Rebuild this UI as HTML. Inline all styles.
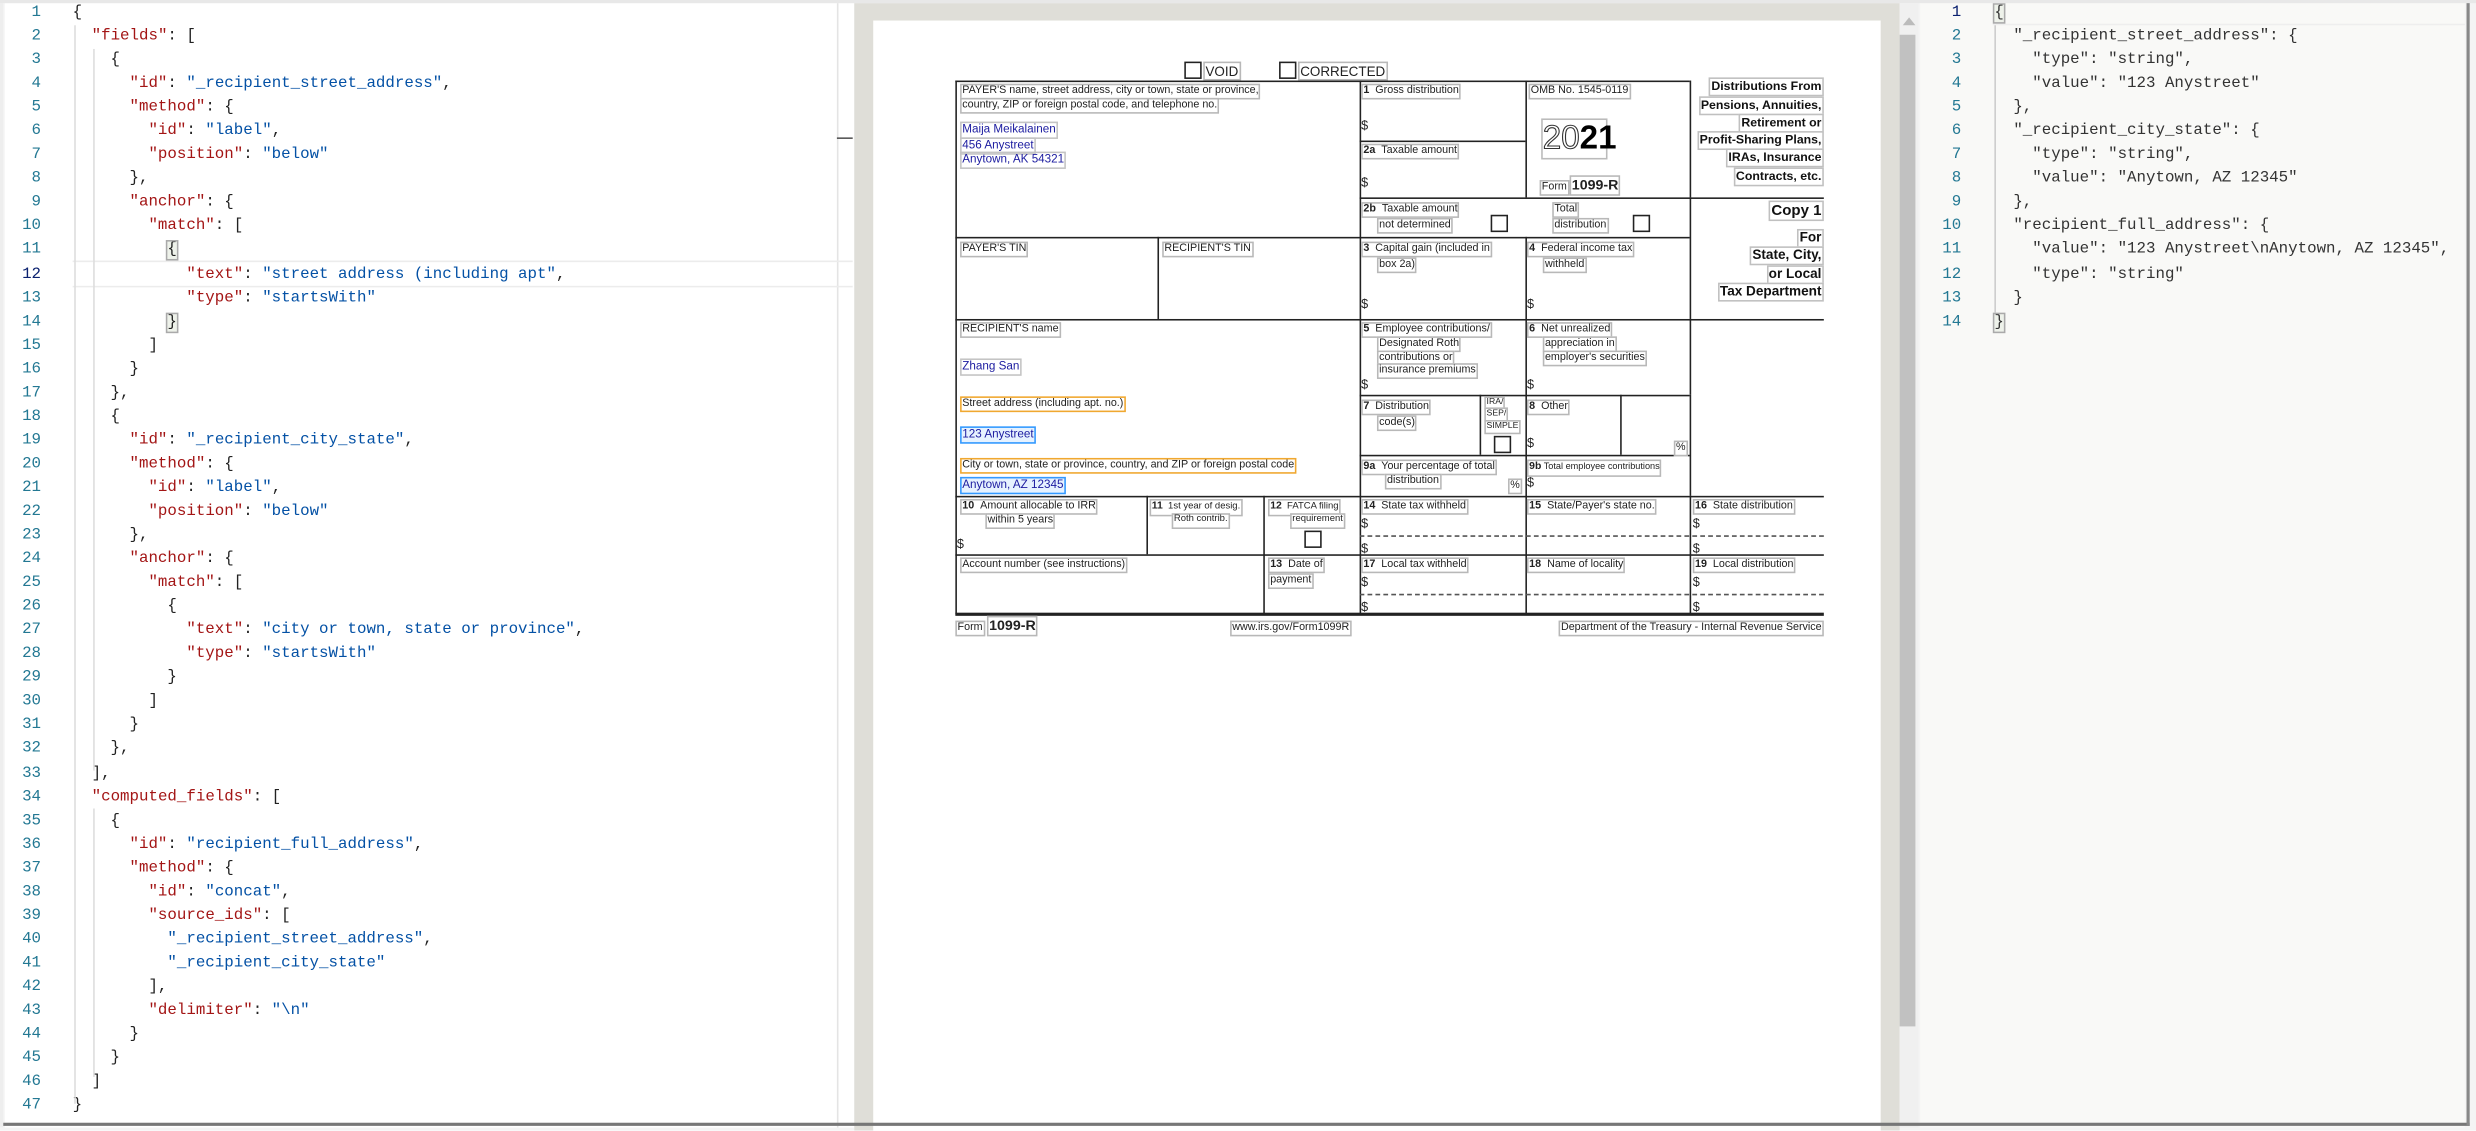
<!DOCTYPE html>
<html><head><meta charset="utf-8"><style>
html,body{margin:0;padding:0;width:2476px;height:1131px;overflow:hidden;background:#fff}
#r{position:absolute;left:0;top:0;width:1568px;height:716.3px;transform:scale(1.57908);transform-origin:0 0;overflow:hidden;background:#f4f4f4}
.a{position:absolute}
.ed{font-family:"Liberation Mono",monospace;font-size:10px;color:#222}
.ln{position:absolute;width:26px;text-align:right;color:#237893;line-height:15.05px}
.cd{position:absolute;white-space:pre;line-height:15.05px}
.k{color:#a31515}.s{color:#0451a5}
.l{position:absolute;font-family:"Liberation Sans",sans-serif;font-size:6.8px;color:#222;line-height:7.8px;white-space:nowrap;border:0.6px solid #b8b8b8;padding:0 0.4px;background:#fff}
.b{position:absolute;font-family:"Liberation Sans",sans-serif;font-size:7.4px;color:#1c1ca0;line-height:8.6px;white-space:nowrap;border:0.6px solid #c4c4c4;padding:0 0.4px}
.t{position:absolute;font-family:"Liberation Sans",sans-serif;font-size:7.8px;font-weight:bold;color:#111;line-height:9.5px;white-space:nowrap;border:0.6px solid #c0c0c0;padding:0 0.5px;background:#fff}
.h{position:absolute;background:#222;height:1px}
.v{position:absolute;background:#222;width:1px}
.d{position:absolute;border-top:1px dashed #555;height:0}
.cb{position:absolute;width:9px;height:9px;border:0.8px solid #222;background:#fff}
.dl{position:absolute;font-family:"Liberation Sans",sans-serif;font-size:8px;color:#222}
</style></head><body><div id="r">
<div class="a" style="left:3px;top:2px;width:527px;height:712px;background:#fff"></div>
<div class="a" style="left:530px;top:2px;width:10px;height:712px;background:#fff;border-left:1px solid #e4e4e4"></div>
<div class="a" style="left:530px;top:87px;width:10px;height:1.3px;background:#555"></div>
<div class="a" style="left:46px;top:165px;width:494px;height:15px;border-top:1px solid #ececec;border-bottom:1px solid #ececec"></div>
<div class="ed">
<div class="a" style="left:0;top:1px">
<div class="ln" style="left:0;top:0">1<br>2<br>3<br>4<br>5<br>6<br>7<br>8<br>9<br>10<br>11<br><span style="color:#0b216f">12</span><br>13<br>14<br>15<br>16<br>17<br>18<br>19<br>20<br>21<br>22<br>23<br>24<br>25<br>26<br>27<br>28<br>29<br>30<br>31<br>32<br>33<br>34<br>35<br>36<br>37<br>38<br>39<br>40<br>41<br>42<br>43<br>44<br>45<br>46<br>47</div>
<div class="cd" style="left:46px;top:0">{
  <span class="k">"fields"</span>: [
    {
      <span class="k">"id"</span>: <span class="s">"_recipient_street_address"</span>,
      <span class="k">"method"</span>: {
        <span class="k">"id"</span>: <span class="s">"label"</span>,
        <span class="k">"position"</span>: <span class="s">"below"</span>
      },
      <span class="k">"anchor"</span>: {
        <span class="k">"match"</span>: [
          <span style="background:#eef2ea;outline:0.6px solid #aaa">{</span>
            <span class="k">"text"</span>: <span class="s">"street address (including apt"</span>,
            <span class="k">"type"</span>: <span class="s">"startsWith"</span>
          <span style="background:#eef2ea;outline:0.6px solid #aaa">}</span>
        ]
      }
    },
    {
      <span class="k">"id"</span>: <span class="s">"_recipient_city_state"</span>,
      <span class="k">"method"</span>: {
        <span class="k">"id"</span>: <span class="s">"label"</span>,
        <span class="k">"position"</span>: <span class="s">"below"</span>
      },
      <span class="k">"anchor"</span>: {
        <span class="k">"match"</span>: [
          {
            <span class="k">"text"</span>: <span class="s">"city or town, state or province"</span>,
            <span class="k">"type"</span>: <span class="s">"startsWith"</span>
          }
        ]
      }
    },
  ],
  <span class="k">"computed_fields"</span>: [
    {
      <span class="k">"id"</span>: <span class="s">"recipient_full_address"</span>,
      <span class="k">"method"</span>: {
        <span class="k">"id"</span>: <span class="s">"concat"</span>,
        <span class="k">"source_ids"</span>: [
          <span class="s">"_recipient_street_address"</span>,
          <span class="s">"_recipient_city_state"</span>
        ],
        <span class="k">"delimiter"</span>: <span class="s">"\n"</span>
      }
    }
  ]
}</div>
</div>
</div>
<div class="a" style="left:47px;top:16px;width:0.6px;height:683px;background:#ddd"></div>
<div class="a" style="left:59px;top:31px;width:0.6px;height:457px;background:#ddd"></div>
<div class="a" style="left:59px;top:512px;width:0.6px;height:170px;background:#ddd"></div>
<div class="a" style="left:541px;top:2px;width:662px;height:714px;background:#dfded8"></div>
<div class="a" style="left:553px;top:13px;width:638px;height:703px;background:#fff"></div>
<div class="a" style="left:1203px;top:2px;width:12px;height:712px;background:#f0f0f0"></div>
<div class="a" style="left:1203px;top:22px;width:10px;height:628px;background:#c1c1c1"></div>
<div class="a" style="left:1205px;top:11px;width:0;height:0;border-left:4px solid transparent;border-right:4px solid transparent;border-bottom:5px solid #bbb"></div>
<div class="a" style="left:1216px;top:2px;width:345px;height:712px;background:#f9f9f7"></div>
<div class="a" style="left:1262px;top:1px;width:299px;height:14px;border-bottom:1px solid #eee"></div>
<div class="ed" style="color:#333">
<div class="ln" style="left:1216px;top:1px">
<span style="color:#0b216f">1</span><br>2<br>3<br>4<br>5<br>6<br>7<br>8<br>9<br>10<br>11<br>12<br>13<br>14</div>
<div class="cd" style="left:1263px;top:1px"><span style="background:#eef2ea;outline:0.6px solid #aaa">{</span>
  "_recipient_street_address": {
    "type": "string",
    "value": "123 Anystreet"
  },
  "_recipient_city_state": {
    "type": "string",
    "value": "Anytown, AZ 12345"
  },
  "recipient_full_address": {
    "value": "123 Anystreet\nAnytown, AZ 12345",
    "type": "string"
  }
<span style="background:#eef2ea;outline:0.6px solid #aaa">}</span></div>
</div>
<div class="a" style="left:1263px;top:16px;width:0.6px;height:182px;background:#ccc"></div>
<div class="a" style="left:0;top:0;width:1568px;height:2px;background:#e8e8e8"></div>
<div class="a" style="left:2px;top:711px;width:1562px;height:2px;background:#777"></div>
<div class="a" style="left:1562px;top:2px;width:2px;height:711px;background:#888"></div>
<div class="a" style="left:0;top:2px;width:2px;height:712px;background:#eee"></div>

<div class="cb" style="left:750px;top:39px"></div><div class="l" style="left:762px;top:39px;font-size:8.5px;line-height:10px">VOID</div>
<div class="cb" style="left:810px;top:39px"></div><div class="l" style="left:822px;top:39px;font-size:8.5px;line-height:10px">CORRECTED</div>

<div class="h" style="left:605px;top:51px;width:465px"></div>
<div class="v" style="left:605px;top:51px;height:338px"></div>
<div class="v" style="left:861px;top:51px;height:338px"></div>
<div class="v" style="left:966px;top:51px;height:74px"></div>
<div class="v" style="left:1070px;top:51px;height:74px"></div>
<div class="h" style="left:861px;top:89px;width:105px"></div>
<div class="h" style="left:861px;top:125px;width:294px"></div>
<div class="v" style="left:1070px;top:125px;height:77px"></div>
<div class="h" style="left:605px;top:150px;width:465px"></div>
<div class="v" style="left:733px;top:150px;height:52px"></div>
<div class="v" style="left:966px;top:150px;height:239px"></div>
<div class="h" style="left:605px;top:202px;width:550px"></div>
<div class="v" style="left:1070px;top:202px;height:48px"></div>
<div class="h" style="left:861px;top:250px;width:209px"></div>
<div class="v" style="left:937px;top:250px;height:38px"></div>
<div class="v" style="left:1026px;top:250px;height:38px"></div>
<div class="v" style="left:1070px;top:250px;height:64px"></div>
<div class="h" style="left:861px;top:288px;width:209px"></div>
<div class="h" style="left:605px;top:314px;width:550px"></div>
<div class="v" style="left:726px;top:314px;height:37px"></div>
<div class="v" style="left:800px;top:314px;height:75px"></div>
<div class="v" style="left:1070px;top:314px;height:75px"></div>
<div class="h" style="left:605px;top:351px;width:550px"></div>
<div class="h" style="left:605px;top:388px;width:550px;height:1.5px"></div>
<div class="d" style="left:861px;top:339px;width:294px"></div>
<div class="d" style="left:861px;top:376px;width:294px"></div>

<div class="l" style="left:608px;top:53px">PAYER'S name, street address, city or town, state or province,</div>
<div class="l" style="left:608px;top:62px">country, ZIP or foreign postal code, and telephone no.</div>
<div class="b" style="left:608px;top:77px">Maija Meikalainen</div>
<div class="b" style="left:608px;top:87px">456 Anystreet</div>
<div class="b" style="left:608px;top:96px">Anytown, AK 54321</div>
<div class="l" style="left:862px;top:53px"><b>1</b> &nbsp;Gross distribution</div>
<div class="dl" style="left:862px;top:75px">$</div>
<div class="l" style="left:862px;top:91px"><b>2a</b> &nbsp;Taxable amount</div>
<div class="dl" style="left:862px;top:111px">$</div>
<div class="l" style="left:968px;top:53px">OMB No. 1545-0119</div>
<div class="a" style="left:976px;top:75px;width:40px;height:24px;border:0.6px solid #bbb;font-family:'Liberation Sans',sans-serif;font-size:21px;line-height:24px;text-align:center;white-space:nowrap"><span style="color:#fff;-webkit-text-stroke:0.7px #333">20</span><b>21</b></div>
<div class="l" style="left:975px;top:114px">Form</div>
<div class="l" style="left:994px;top:111px;font-size:9px;line-height:10.5px;font-weight:bold">1099-R</div>
<div class="t" style="right:413px;top:49px">Distributions From</div>
<div class="t" style="right:413px;top:61px">Pensions, Annuities,</div>
<div class="t" style="right:413px;top:72px">Retirement or</div>
<div class="t" style="right:413px;top:83px">Profit-Sharing Plans,</div>
<div class="t" style="right:413px;top:94px">IRAs, Insurance</div>
<div class="t" style="right:413px;top:106px">Contracts, etc.</div>
<div class="t" style="right:413px;top:127px;font-size:9.5px;line-height:11px">Copy 1</div>
<div class="t" style="right:413px;top:145px;font-size:8.6px">For</div>
<div class="t" style="right:413px;top:156px;font-size:8.6px">State, City,</div>
<div class="t" style="right:413px;top:168px;font-size:8.6px">or Local</div>
<div class="t" style="right:413px;top:179px;font-size:8.6px">Tax Department</div>

<div class="l" style="left:862px;top:128px"><b>2b</b> &nbsp;Taxable amount</div>
<div class="l" style="left:872px;top:138px">not determined</div>
<div class="cb" style="left:944px;top:136px"></div>
<div class="l" style="left:983px;top:128px">Total</div>
<div class="l" style="left:983px;top:138px">distribution</div>
<div class="cb" style="left:1034px;top:136px"></div>

<div class="l" style="left:608px;top:153px">PAYER'S TIN</div>
<div class="l" style="left:736px;top:153px">RECIPIENT'S TIN</div>
<div class="l" style="left:862px;top:153px"><b>3</b> &nbsp;Capital gain (included in</div>
<div class="l" style="left:872px;top:163px">box 2a)</div>
<div class="dl" style="left:862px;top:188px">$</div>
<div class="l" style="left:967px;top:153px"><b>4</b> &nbsp;Federal income tax</div>
<div class="l" style="left:977px;top:163px">withheld</div>
<div class="dl" style="left:967px;top:188px">$</div>

<div class="l" style="left:608px;top:204px">RECIPIENT'S name</div>
<div class="b" style="left:608px;top:227px">Zhang San</div>
<div class="l" style="left:608px;top:251px;border:0.9px solid #f0a830">Street address (including apt. no.)</div>
<div class="b" style="left:608px;top:270px;border:0.9px solid #3399ff;background:#e6f2ff">123 Anystreet</div>
<div class="l" style="left:608px;top:290px;border:0.9px solid #f0a830">City or town, state or province, country, and ZIP or foreign postal code</div>
<div class="b" style="left:608px;top:302px;border:0.9px solid #3399ff;background:#e6f2ff">Anytown, AZ 12345</div>

<div class="l" style="left:862px;top:204px"><b>5</b> &nbsp;Employee contributions/</div>
<div class="l" style="left:872px;top:213px">Designated Roth</div>
<div class="l" style="left:872px;top:222px">contributions or</div>
<div class="l" style="left:872px;top:230px">insurance premiums</div>
<div class="dl" style="left:862px;top:239px">$</div>
<div class="l" style="left:967px;top:204px"><b>6</b> &nbsp;Net unrealized</div>
<div class="l" style="left:977px;top:213px">appreciation in</div>
<div class="l" style="left:977px;top:222px">employer's securities</div>
<div class="dl" style="left:967px;top:239px">$</div>

<div class="l" style="left:862px;top:253px"><b>7</b> &nbsp;Distribution</div>
<div class="l" style="left:872px;top:263px">code(s)</div>
<div class="l" style="left:940px;top:251px;font-size:5.5px;line-height:6.5px">IRA/</div>
<div class="l" style="left:940px;top:258px;font-size:5.5px;line-height:6.5px">SEP/</div>
<div class="l" style="left:940px;top:266px;font-size:5.5px;line-height:6.5px">SIMPLE</div>
<div class="cb" style="left:946px;top:276px"></div>
<div class="l" style="left:967px;top:253px"><b>8</b> &nbsp;Other</div>
<div class="dl" style="left:967px;top:276px">$</div>
<div class="l" style="left:1060px;top:279px">%</div>

<div class="l" style="left:862px;top:291px"><b>9a</b> &nbsp;Your percentage of total</div>
<div class="l" style="left:877px;top:300px">distribution</div>
<div class="l" style="left:955px;top:303px">%</div>
<div class="l" style="left:967px;top:291px;font-size:5.8px"><b style="font-size:6.6px">9b</b> Total employee contributions</div>
<div class="dl" style="left:967px;top:301px">$</div>

<div class="l" style="left:608px;top:316px"><b>10</b> &nbsp;Amount allocable to IRR</div>
<div class="l" style="left:624px;top:325px">within 5 years</div>
<div class="dl" style="left:606px;top:340px">$</div>
<div class="l" style="left:728px;top:316px;font-size:6px"><b style="font-size:6.6px">11</b> &nbsp;1st year of desig.</div>
<div class="l" style="left:742px;top:325px;font-size:6px">Roth contrib.</div>
<div class="l" style="left:803px;top:316px;font-size:6px"><b style="font-size:6.6px">12</b> &nbsp;FATCA filing</div>
<div class="l" style="left:817px;top:325px;font-size:6px">requirement</div>
<div class="cb" style="left:826px;top:336px"></div>
<div class="l" style="left:862px;top:316px"><b>14</b> &nbsp;State tax withheld</div>
<div class="dl" style="left:862px;top:327px">$</div>
<div class="dl" style="left:862px;top:343px">$</div>
<div class="l" style="left:967px;top:316px"><b>15</b> &nbsp;State/Payer's state no.</div>
<div class="l" style="left:1072px;top:316px"><b>16</b> &nbsp;State distribution</div>
<div class="dl" style="left:1072px;top:327px">$</div>
<div class="dl" style="left:1072px;top:343px">$</div>

<div class="l" style="left:608px;top:353px">Account number (see instructions)</div>
<div class="l" style="left:803px;top:353px"><b>13</b> &nbsp;Date of</div>
<div class="l" style="left:803px;top:363px">payment</div>
<div class="l" style="left:862px;top:353px"><b>17</b> &nbsp;Local tax withheld</div>
<div class="dl" style="left:862px;top:364px">$</div>
<div class="dl" style="left:862px;top:380px">$</div>
<div class="l" style="left:967px;top:353px"><b>18</b> &nbsp;Name of locality</div>
<div class="l" style="left:1072px;top:353px"><b>19</b> &nbsp;Local distribution</div>
<div class="dl" style="left:1072px;top:364px">$</div>
<div class="dl" style="left:1072px;top:380px">$</div>

<div class="l" style="left:605px;top:393px">Form</div>
<div class="l" style="left:625px;top:390px;font-size:9px;line-height:10.5px;font-weight:bold">1099-R</div>
<div class="l" style="left:779px;top:393px">www.irs.gov/Form1099R</div>
<div class="l" style="right:413px;top:393px">Department of the Treasury - Internal Revenue Service</div>
</div></body></html>
